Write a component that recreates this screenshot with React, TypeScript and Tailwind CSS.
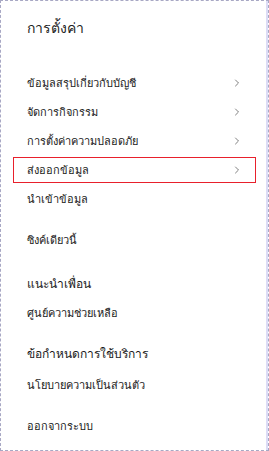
import { ChevronRight } from "lucide-react";

type Item = {
  label: string;
  chevron?: boolean;
  big?: boolean;
  active?: boolean;
  gap?: string;
};

const items: Item[] = [
  { label: "ข้อมูลสรุปเกี่ยวกับบัญชี", chevron: true },
  { label: "จัดการกิจกรรม", chevron: true },
  { label: "การตั้งค่าความปลอดภัย", chevron: true },
  { label: "ส่งออกข้อมูล", chevron: true, active: true },
  { label: "นำเข้าข้อมูล" },
  { label: "ซิงค์เดียวนี้", gap: "mt-[12px]" },
  { label: "แนะนำเพื่อน", big: true, gap: "mt-[15px]" },
  { label: "ศูนย์ความช่วยเหลือ" },
  { label: "ข้อกำหนดการใช้บริการ", big: true, gap: "mt-[12px]" },
  { label: "นโยบายความเป็นส่วนตัว", gap: "mt-[2px]" },
  { label: "ออกจากระบบ", gap: "mt-[12px]" },
];

export default function App() {
  return (
    <div
      className="h-[451px] w-[269px] overflow-hidden border border-dashed border-[#a8a8c4] bg-white"
      style={{ fontFamily: "Tahoma, 'Liberation Sans', 'Noto Sans', sans-serif" }}
    >
      <div className="flex h-full">
        <div className="flex flex-1 flex-col pl-[12px] pr-[10px]">
          <h1 className="mt-[16px] h-[22px] pl-[14px] text-[14px] font-normal leading-[22px] text-[#222]">
            การตั้งค่า
          </h1>
          <ul className="mt-[31px] flex flex-col gap-[3px]">
            {items.map((it) => (
              <li
                key={it.label}
                className={`${it.gap ?? ""} flex h-[26px] items-center justify-between pl-[13px] pr-[12px] ${
                  it.active ? "border border-[#e8202c]" : "border border-transparent"
                }`}
              >
                <span
                  className={`${it.big ? "text-[12px]" : "text-[11px]"} leading-none text-[#1a1a1a]`}
                >
                  {it.label}
                </span>
                {it.chevron && (
                  <ChevronRight className="h-[12px] w-[12px] text-[#555]" strokeWidth={1.5} />
                )}
              </li>
            ))}
          </ul>
        </div>
        <div className="w-[2px] bg-[#dcdcf6]" />
      </div>
    </div>
  );
}
